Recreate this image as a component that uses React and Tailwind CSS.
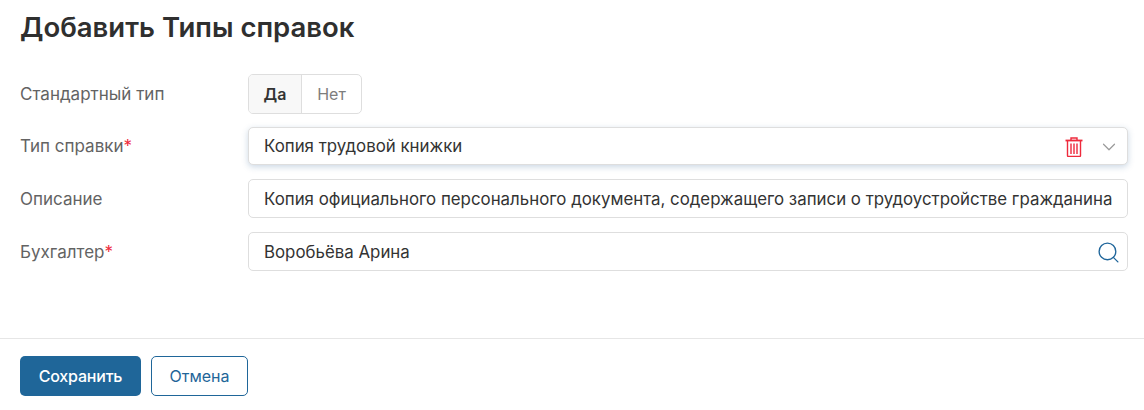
import React from "react";
import { ChevronDown, Search } from "lucide-react";

function TrashIcon() {
  return (
    <svg width="18" height="20" viewBox="0 0 18 20" fill="none" stroke="#ee2a3c" strokeWidth="1.4">
      <path d="M0.5 3.5h17" strokeWidth="1.8" />
      <path d="M6 3V1h6v2" />
      <path d="M2.5 4v14.5a1 1 0 0 0 1 1h11a1 1 0 0 0 1-1V4" />
      <path d="M6 6.5v10.5M9 6.5v10.5M12 6.5v10.5" />
    </svg>
  );
}

function Row({ label, required, className, children }) {
  return (
    <div className={`flex items-center ${className}`}>
      <div className="w-[228px] pt-[2px] text-[17px] text-[#636363]">
        {label}
        {required && <span className="text-[#ee2a3c]">*</span>}
      </div>
      {children}
    </div>
  );
}

export default function App() {
  const box = "flex-1 h-[39px] flex items-center pl-[15px] pr-2 pt-[2px] bg-white border border-[#dedede] rounded-[5px] text-[16.85px] text-[#333333]";

  return (
    <div className="w-[1144px] h-[410px] bg-white font-['Inter',sans-serif] flex flex-col overflow-hidden">
      <h1 className="px-5 pt-2 pb-px text-[27.5px] leading-[38px] font-semibold text-[#2f2f2f]">
        Добавить Типы справок
      </h1>

      <div className="flex flex-col pl-5 pr-4 pt-[27px]">
        <Row label="Стандартный тип">
          <div className="flex h-10 border border-[#dedede] rounded-[5px] text-[16px] overflow-hidden">
            <div className="w-[53px] flex items-center justify-center bg-[#f8f8f8] border-r border-[#dedede] font-semibold text-[#333333]">
              Да
            </div>
            <div className="w-[59px] flex items-center justify-center text-[#7d7d7d]">Нет</div>
          </div>
        </Row>

        <Row label="Тип справки" required className="mt-[13px]">
          <div className={`${box} !h-[38px] shadow-[0_2px_6px_rgba(50,100,150,0.25)]`}>
            <span className="flex-1">Копия трудовой книжки</span>
            <TrashIcon />
            <ChevronDown className="ml-[15px] -mr-px text-[#9a9a9a]" size={22} strokeWidth={1.3} />
          </div>
        </Row>

        <Row label="Описание" className="mt-[14px]">
          <div className={`${box} whitespace-nowrap`}>
            Копия официального персонального документа, содержащего записи о трудоустройстве гражданина
          </div>
        </Row>

        <Row label="Бухгалтер" required className="mt-[14px]">
          <div className={box}>
            <span className="flex-1">Воробьёва Арина</span>
            <Search className="-mr-[2px] text-[#20669b]" size={25} strokeWidth={1.3} />
          </div>
        </Row>
      </div>

      <div className="mt-[67px] border-t border-[#e6e6e6] px-5 pt-[17px] flex gap-[10px] text-[16px]">
        <button className="w-[121px] h-10 bg-[#1f6699] text-white rounded-[5px] font-medium tracking-[-0.2px]">Сохранить</button>
        <button className="w-[97px] h-10 bg-white text-[#1f6699] border border-[#1f6699] rounded-[5px]">Отмена</button>
      </div>
    </div>
  );
}
